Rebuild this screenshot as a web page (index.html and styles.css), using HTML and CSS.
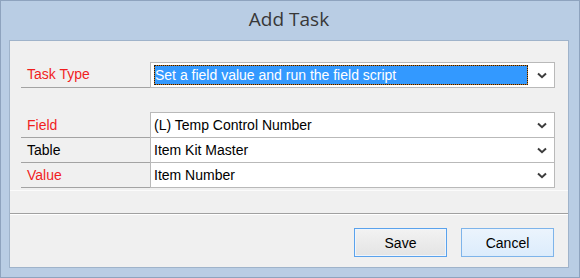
FILE: index.html
```html
<!DOCTYPE html>
<html>
<head>
<meta charset="utf-8">
<title>Add Task</title>
<link rel="stylesheet" href="styles.css">
</head>
<body>
<div class="window">
  <div class="titlebar">Add Task</div>
  <div class="client">
    <div class="panel">
      <div class="task-row">
        <div class="label red">Task Type</div>
        <div class="combo single">
          <div class="selected">Set a field value and run the field script</div>
          <svg class="chev" width="10" height="7" viewBox="0 0 10 7"><polyline points="1,1.5 5,5.2 9,1.5" fill="none" stroke="#3c3c3c" stroke-width="2"/></svg>
        </div>
      </div>
      <div class="group">
        <div class="labels">
          <div class="label red">Field</div>
          <div class="label">Table</div>
          <div class="label red">Value</div>
        </div>
        <div class="combos">
          <div class="combo-row"><span class="value">(L) Temp Control Number</span><svg class="chev" width="10" height="7" viewBox="0 0 10 7"><polyline points="1,1.5 5,5.2 9,1.5" fill="none" stroke="#3c3c3c" stroke-width="2"/></svg></div>
          <div class="combo-row"><span class="value">Item Kit Master</span><svg class="chev" width="10" height="7" viewBox="0 0 10 7"><polyline points="1,1.5 5,5.2 9,1.5" fill="none" stroke="#3c3c3c" stroke-width="2"/></svg></div>
          <div class="combo-row"><span class="value">Item Number</span><svg class="chev" width="10" height="7" viewBox="0 0 10 7"><polyline points="1,1.5 5,5.2 9,1.5" fill="none" stroke="#3c3c3c" stroke-width="2"/></svg></div>
        </div>
      </div>
    </div>
    <div class="separator"></div>
    <div class="buttons">
      <button class="btn save">Save</button>
      <button class="btn cancel">Cancel</button>
    </div>
  </div>
</div>
</body>
</html>
```

FILE: styles.css
```css
html, body {
  margin: 0;
  padding: 0;
  background: #ffffff;
}
body {
  font-family: "Liberation Sans", Arial, sans-serif;
  font-size: 14px;
  color: #000;
}
.window {
  width: 580px;
  height: 278px;
  box-sizing: border-box;
  border: 1px solid #8ea3be;
  background: #b9cde4;
  padding: 0 10px 9px 8px;
  display: flex;
  flex-direction: column;
}
.titlebar {
  height: 39px;
  line-height: 37px;
  box-sizing: border-box;
  text-align: center;
  font-family: "Open Sans", "Noto Sans", sans-serif;
  font-size: 19px;
  color: #383838;
  padding-left: 0;
}
.client {
  flex: 1;
  border: 1px solid #9fb3ca;
  background: #f0f0f0;
  display: flex;
  flex-direction: column;
}
.panel {
  padding: 21px 12px 2px 11px;
  border-bottom: 1px solid #fbfbfb;
  margin: 0 0 0 0;
}
.task-row {
  display: flex;
  height: 26px;
}
.label {
  width: 129px;
  box-sizing: border-box;
  padding-left: 6px;
  border-bottom: 1px solid #a3a3a3;
  line-height: 25px;
  height: 26px;
  white-space: nowrap;
}
.red {
  color: #f01e1e;
}
.combo.single {
  width: 405px;
  box-sizing: border-box;
  height: 26px;
  border: 1px solid #b9b9b9;
  background: #fff;
  display: flex;
  align-items: center;
}
.selected {
  margin: 0 0 0 3px;
  width: 374px;
  height: 20px;
  box-sizing: border-box;
  border: 1px dotted #1e1a14;
  background: linear-gradient(#3399ff, #3399ff) padding-box, #c47a2a border-box;
  color: #fff;
  line-height: 18px;
  white-space: nowrap;
  overflow: hidden;
}
.chev {
  margin-left: auto;
  margin-right: 7px;
  display: block;
}
.group {
  display: flex;
  margin-top: 24px;
}
.labels {
  padding-top: 1px;
  display: flex;
  flex-direction: column;
}
.labels .label {
  height: 25px;
  line-height: 24px;
}
.combos {
  width: 405px;
  box-sizing: border-box;
  border: 1px solid #b9b9b9;
  border-bottom: none;
  background: #fff;
  display: flex;
  flex-direction: column;
}
.combo-row {
  height: 25px;
  box-sizing: border-box;
  border-bottom: 1px solid #b9b9b9;
  display: flex;
  align-items: center;
  padding-left: 3px;
}
.value {
  line-height: 24px;
  white-space: nowrap;
}
.separator {
  margin-top: 22px;
  height: 1px;
  background: #a0a0a0;
  border-bottom: 1px solid #ffffff;
}
.buttons {
  margin-top: 13px;
  display: flex;
  justify-content: flex-end;
  gap: 14px;
  padding-right: 14px;
}
.btn {
  width: 93px;
  height: 29px;
  box-sizing: border-box;
  font-family: "Liberation Sans", Arial, sans-serif;
  font-size: 14px;
  color: #000;
  padding: 0;
  margin: 0;
}
.save {
  border: 1px solid #5aa2ec;
  background: linear-gradient(#f2f2f2, #e4e4e4);
  box-shadow: inset 0 0 0 1px #eef5fd;
}
.cancel {
  border: 1px solid #7eb4ea;
  background: linear-gradient(#ebf4fd, #dcecfc);
}
```
